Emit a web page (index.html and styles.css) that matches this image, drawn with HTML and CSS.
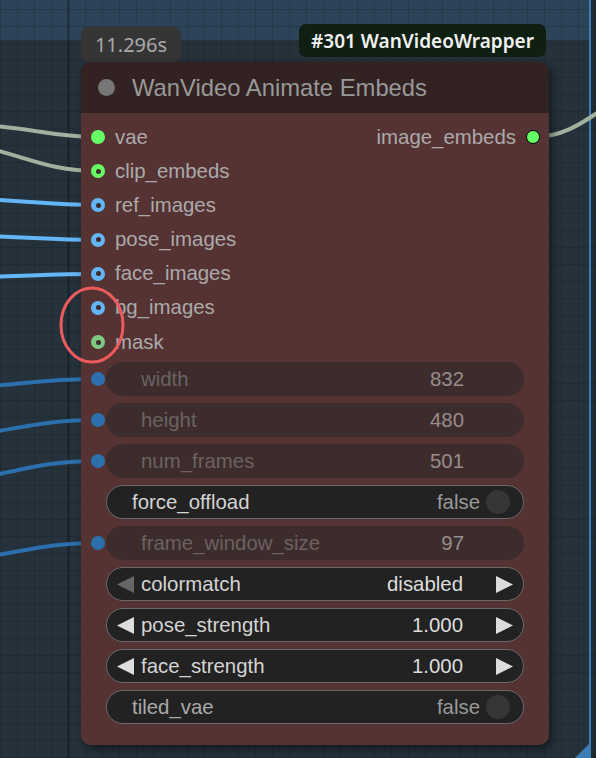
FILE: index.html
```html
<!DOCTYPE html>
<html>
<head>
<meta charset="utf-8">
<link rel="stylesheet" href="styles.css">
</head>
<body>
<div class="canvas">
  <div class="group-band"></div>
  <div class="outside"></div>
  <div class="grid"></div>
  <div class="thick-line"></div>
  <div class="group-edge"></div>
  <svg class="group-handle" width="17" height="17" viewBox="0 0 17 17"><polygon points="17,0 17,17 0,17" fill="#3d7db5"/></svg>

  <svg class="wires" width="596" height="758" viewBox="0 0 596 758">
    <g fill="none" stroke-width="4" stroke-linecap="round">
      <path d="M -20 125 C 30 127, 50 137, 98 137" stroke="#a0b29f"/>
      <path d="M -20 146 C 30 158, 50 171, 98 171" stroke="#a0b29f"/>
      <path d="M -20 199 C 30 201, 50 205, 98 205" stroke="#64b5f6"/>
      <path d="M -20 236 C 30 237, 50 240, 98 240" stroke="#64b5f6"/>
      <path d="M -20 277 C 30 276, 50 274, 98 274" stroke="#64b5f6"/>
      <path d="M -20 387 C 30 383, 50 379, 98 379" stroke="#2b70ad"/>
      <path d="M -20 434 C 30 426, 50 420, 98 420" stroke="#2b70ad"/>
      <path d="M -20 478 C 30 468, 50 461, 98 461" stroke="#2b70ad"/>
      <path d="M -20 558 C 30 550, 50 543, 98 543" stroke="#2b70ad"/>
      <path d="M 533 137 C 560 137, 578 127, 610 104" stroke="#a0b29f"/>
    </g>
  </svg>

  <div class="badge time">11.296s</div>
  <div class="badge nid">#301 WanVideoWrapper</div>

  <div class="node">
    <div class="title">
      <span class="tdot"></span>
      <span class="ttext">WanVideo Animate Embeds</span>
    </div>
    <div class="body">
      <div class="io">
        <div class="inputs">
          <div class="slot"><span class="dot d-vae"></span><span class="lbl">vae</span></div>
          <div class="slot"><span class="dot ring ring-green"></span><span class="lbl">clip_embeds</span></div>
          <div class="slot"><span class="dot ring ring-blue"></span><span class="lbl">ref_images</span></div>
          <div class="slot"><span class="dot ring ring-blue"></span><span class="lbl">pose_images</span></div>
          <div class="slot"><span class="dot ring ring-blue"></span><span class="lbl">face_images</span></div>
          <div class="slot"><span class="dot ring ring-blue"></span><span class="lbl">bg_images</span></div>
          <div class="slot"><span class="dot ring ring-mask"></span><span class="lbl">mask</span></div>
        </div>
        <div class="outputs">
          <div class="slot out"><span class="lbl">image_embeds</span><span class="dot d-out"></span></div>
        </div>
      </div>

      <div class="widgets">
        <div class="wrow"><span class="dot d-int"></span>
          <div class="pill off"><span class="wl">width</span><span class="wv">832</span></div></div>
        <div class="wrow"><span class="dot d-int"></span>
          <div class="pill off"><span class="wl">height</span><span class="wv">480</span></div></div>
        <div class="wrow"><span class="dot d-int"></span>
          <div class="pill off"><span class="wl">num_frames</span><span class="wv">501</span></div></div>
        <div class="wrow"><span class="nodot"></span>
          <div class="pill on toggle"><span class="wl bright">force_offload</span><span class="wv tv">false</span><span class="knob"></span></div></div>
        <div class="wrow"><span class="dot d-int"></span>
          <div class="pill off"><span class="wl">frame_window_size</span><span class="wv">97</span></div></div>
        <div class="wrow"><span class="nodot"></span>
          <div class="pill on combo">
            <svg class="arr" width="17" height="17" viewBox="0 0 17 17"><polygon points="17,0 17,17 0,8.5" fill="#666"/></svg>
            <span class="wl bright">colormatch</span><span class="wv cv">disabled</span>
            <svg class="arr r" width="17" height="17" viewBox="0 0 17 17"><polygon points="0,0 0,17 17,8.5" fill="#ddd"/></svg>
          </div></div>
        <div class="wrow"><span class="nodot"></span>
          <div class="pill on combo">
            <svg class="arr" width="17" height="17" viewBox="0 0 17 17"><polygon points="17,0 17,17 0,8.5" fill="#ddd"/></svg>
            <span class="wl bright">pose_strength</span><span class="wv cv">1.000</span>
            <svg class="arr r" width="17" height="17" viewBox="0 0 17 17"><polygon points="0,0 0,17 17,8.5" fill="#ddd"/></svg>
          </div></div>
        <div class="wrow"><span class="nodot"></span>
          <div class="pill on combo">
            <svg class="arr" width="17" height="17" viewBox="0 0 17 17"><polygon points="17,0 17,17 0,8.5" fill="#ddd"/></svg>
            <span class="wl bright">face_strength</span><span class="wv cv">1.000</span>
            <svg class="arr r" width="17" height="17" viewBox="0 0 17 17"><polygon points="0,0 0,17 17,8.5" fill="#ddd"/></svg>
          </div></div>
        <div class="wrow"><span class="nodot"></span>
          <div class="pill on toggle"><span class="wl">tiled_vae</span><span class="wv tv">false</span><span class="knob"></span></div></div>
      </div>
    </div>
  </div>

  <svg class="annot" width="596" height="758" viewBox="0 0 596 758">
    <ellipse cx="92" cy="325" rx="31" ry="37" fill="none" stroke="#ec5a5c" stroke-width="3"/>
  </svg>
</div>
</body>
</html>
```

FILE: styles.css
```css
* { box-sizing: border-box; }

body {
  margin: 0;
  background: #1f2931;
}

.canvas {
  position: relative;
  width: 596px;
  height: 758px;
  overflow: hidden;
  background-color: #25323c;
  font-family: "Liberation Sans", Arial, sans-serif;
}

.group-band {
  position: absolute;
  left: 0;
  top: 0;
  width: 590px;
  height: 40px;
  background: #2c4358;
}

.outside {
  position: absolute;
  left: 591px;
  top: 0;
  width: 5px;
  height: 758px;
  background: #1f2a33;
}

.grid {
  position: absolute;
  inset: 0;
  background-image:
    linear-gradient(to right, rgba(0, 0, 0, 0.13) 1px, transparent 1px),
    linear-gradient(to bottom, rgba(0, 0, 0, 0.13) 1px, transparent 1px);
  background-size: 17px 17px, 17px 17px;
  background-position: 0 0, 0 9px;
}

.thick-line {
  position: absolute;
  left: 67px;
  top: 0;
  width: 3px;
  height: 758px;
  background: rgba(0, 0, 0, 0.2);
}

.group-edge {
  position: absolute;
  left: 589px;
  top: 0;
  width: 2px;
  height: 758px;
  background: #3a7fb9;
}

.group-handle {
  position: absolute;
  left: 574px;
  top: 742px;
}

.wires {
  position: absolute;
  left: 0;
  top: 0;
}

.annot {
  position: absolute;
  left: 0;
  top: 0;
  pointer-events: none;
}

/* badges */
.badge {
  position: absolute;
  display: flex;
  align-items: center;
  justify-content: center;
}

.badge.time {
  left: 81px;
  top: 27px;
  width: 100px;
  height: 35px;
  background: #353535;
  border-radius: 7px;
  color: #a9a9a9;
  font-family: "Noto Sans", sans-serif;
  font-size: 20px;
}

.badge.nid {
  left: 299px;
  top: 24px;
  width: 247px;
  height: 33px;
  background: #0f1f11;
  border-radius: 7px;
  color: #f2f2f2;
  font-family: "Noto Sans", sans-serif;
  font-size: 19px;
  font-weight: 600;
}

/* node */
.node {
  position: absolute;
  left: 81px;
  top: 62px;
  width: 468px;
  height: 683px;
  border-radius: 10px;
  box-shadow: 3px 4px 8px rgba(0, 0, 0, 0.5);
  display: flex;
  flex-direction: column;
}

.title {
  height: 51px;
  background: #332222;
  border-radius: 10px 10px 0 0;
  display: flex;
  align-items: center;
  padding-left: 17px;
}

.tdot {
  width: 17px;
  height: 17px;
  border-radius: 50%;
  background: #777;
}

.ttext {
  margin-left: 17px;
  color: #999;
  font-size: 23.8px;
  white-space: nowrap;
}

.body {
  flex: 1;
  background: #553333;
  border-radius: 0 0 10px 10px;
  padding-top: 7px;
}

.io {
  display: flex;
  justify-content: space-between;
}

.slot {
  height: 34.17px;
  display: flex;
  align-items: center;
  padding-left: 10px;
}

.slot.out {
  padding-left: 0;
  padding-right: 9px;
}

.lbl {
  color: #aaa;
  font-size: 20.4px;
  white-space: nowrap;
}

.slot .dot { margin-right: 10px; }
.slot.out .dot { margin-right: 0; margin-left: 10px; }

.dot {
  width: 14px;
  height: 14px;
  border-radius: 50%;
  flex: none;
}

.d-vae { background: #66ff66; }
.d-out { background: #66ff66; border: 1.5px solid #000; }
.d-int { background: #2b70ad; }

.ring { position: relative; }
.ring::after {
  content: "";
  position: absolute;
  left: 4.5px;
  top: 4.5px;
  width: 5px;
  height: 5px;
  border-radius: 50%;
  background: #3a2c2c;
}
.ring-green { background: #66ff66; }
.ring-blue { background: #64b5f6; }
.ring-mask { background: #81c784; }

/* widgets */
.widgets {
  margin-top: 3px;
  display: flex;
  flex-direction: column;
  gap: 7px;
}

.wrow {
  height: 34px;
  display: flex;
  align-items: center;
  padding: 0 25px 0 10px;
}

.nodot { width: 15px; flex: none; }
.wrow .dot { margin-right: 1px; }

.pill {
  flex: 1;
  height: 34px;
  border-radius: 17px;
  display: flex;
  align-items: center;
  font-size: 20.4px;
  white-space: nowrap;
}

.pill.off {
  background: #3d2c2c;
  padding: 0 60px 0 35px;
}

.pill.on {
  background: #222;
  border: 1px solid #6a6a6a;
}

.pill.toggle { padding: 0 13px 0 25px; }
.pill.combo { padding: 0 10px 0 10px; }

.wl { color: #aaa; }
.wl.bright { color: #d4d4d4; }
.pill.off .wl { color: #6c6262; }
.pill.off .wv { color: #978d8d; margin-left: auto; }

.wv { margin-left: auto; }
.tv { color: #999; }
.cv { color: #ddd; }

.knob {
  width: 24px;
  height: 24px;
  border-radius: 50%;
  background: #363636;
  margin-left: 6px;
}

.arr { flex: none; }
.combo .wl { margin-left: 7px; }
.arr.r { margin-left: 33px; }
```
